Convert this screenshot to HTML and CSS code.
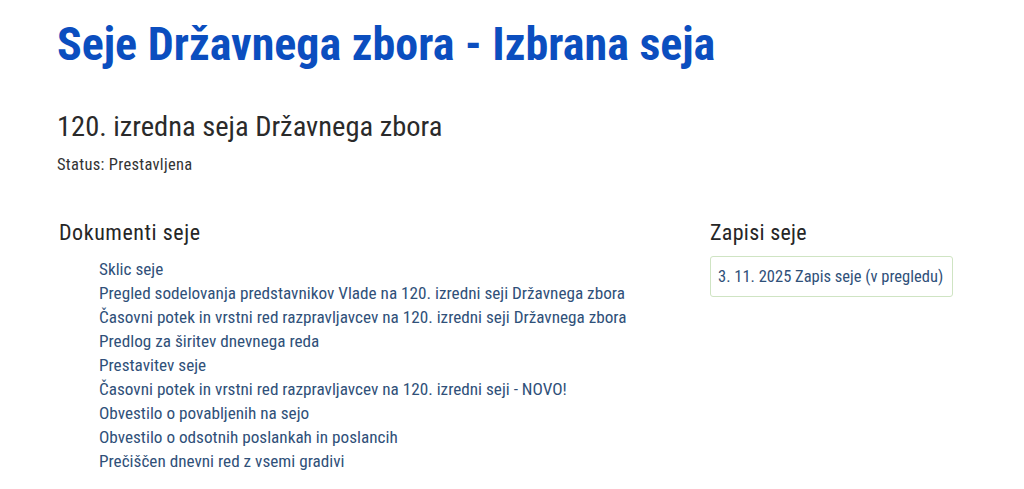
FILE: index.html
```html
<!DOCTYPE html>
<html lang="sl">
<head>
<meta charset="utf-8">
<title>Seje Državnega zbora - Izbrana seja</title>
<link rel="stylesheet" href="styles.css">
</head>
<body>
<main class="page">
  <h1 class="page-title">Seje Državnega zbora - Izbrana seja</h1>
  <h2 class="session-title">120. izredna seja Državnega zbora</h2>
  <p class="status">Status: Prestavljena</p>
  <div class="columns">
    <section class="docs">
      <h3 class="section-title">Dokumenti seje</h3>
      <ul class="doc-list">
        <li><a href="#">Sklic seje</a></li>
        <li><a href="#">Pregled sodelovanja predstavnikov Vlade na 120. izredni seji Državnega zbora</a></li>
        <li><a href="#">Časovni potek in vrstni red razpravljavcev na 120. izredni seji Državnega zbora</a></li>
        <li><a href="#">Predlog za širitev dnevnega reda</a></li>
        <li><a href="#">Prestavitev seje</a></li>
        <li><a href="#">Časovni potek in vrstni red razpravljavcev na 120. izredni seji - NOVO!</a></li>
        <li><a href="#">Obvestilo o povabljenih na sejo</a></li>
        <li><a href="#">Obvestilo o odsotnih poslankah in poslancih</a></li>
        <li><a href="#">Prečiščen dnevni red z vsemi gradivi</a></li>
      </ul>
    </section>
    <section class="records">
      <h3 class="section-title">Zapisi seje</h3>
      <a class="record-box" href="#">3. 11. 2025 Zapis seje (v pregledu)</a>
    </section>
  </div>
</main>
</body>
</html>
```
FILE: styles.css
```css
html, body {
  margin: 0;
  padding: 0;
  background: #ffffff;
}
body {
  font-family: "Roboto Condensed", "Open Sans", sans-serif;
  color: #2b2b2b;
}
.page {
  padding: 18px 0 0 57px;
}
.page-title {
  margin: 0;
  font-size: 46px;
  line-height: 52px;
  font-weight: 700;
  color: #0b4ebf;
}
.session-title {
  margin: 41px 0 0;
  font-size: 28.5px;
  line-height: 32px;
  font-weight: 400;
  color: #2a2a2a;
}
.status {
  margin: 12px 0 0;
  font-size: 16.5px;
  line-height: 20px;
  letter-spacing: 0.3px;
  color: #333;
}
.columns {
  display: flex;
  margin-top: 45px;
}
.docs {
  width: 651px;
  padding-left: 2px;
}
.records {
  width: 243px;
}
.section-title {
  margin: 0;
  font-size: 22px;
  line-height: 26px;
  font-weight: 400;
  letter-spacing: 0.3px;
  color: #262626;
}
.docs .section-title {
  letter-spacing: 0.55px;
}
.doc-list {
  list-style: none;
  margin: 11px 0 0;
  padding: 0 0 0 40px;
}
.doc-list li {
  font-size: 17.2px;
  line-height: 24px;
}
.doc-list a,
.record-box {
  color: #2f5079;
  text-decoration: none;
}
.record-box {
  display: block;
  margin-top: 10px;
  height: 39px;
  padding: 0 7px;
  border: 1px solid #cfe4c3;
  border-radius: 3px;
  font-size: 16.5px;
  line-height: 40px;
  white-space: nowrap;
}
```
